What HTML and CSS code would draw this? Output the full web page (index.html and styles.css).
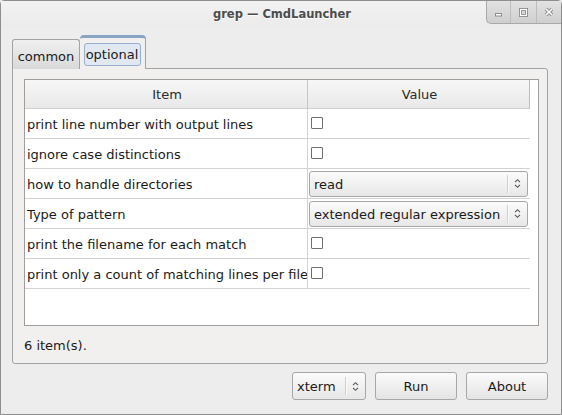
FILE: index.html
```html
<!DOCTYPE html>
<html>
<head>
<meta charset="utf-8">
<link rel="stylesheet" href="styles.css">
</head>
<body>
<div class="window">
  <div class="titlebar">
    <div></div>
    <div class="title">grep — CmdLauncher</div>
    <div class="wbtns">
      <div class="wbtn"><svg width="9" height="9" viewBox="0 0 9 9"><rect x="1.5" y="5.5" width="6" height="2.5" fill="#fff" stroke="#8c8c8c"/></svg></div>
      <div class="wbtn"><svg width="9" height="9" viewBox="0 0 9 9"><rect x="1.5" y="1.5" width="6" height="6" fill="none" stroke="#8c8c8c" stroke-width="3"/><rect x="1.5" y="1.5" width="6" height="6" fill="none" stroke="#fff" stroke-width="1.2"/></svg></div>
      <div class="wbtn"><svg width="10" height="10" viewBox="0 0 10 10"><path d="M2 2 L8 8 M8 2 L2 8" stroke="#8c8c8c" stroke-width="3.4"/><path d="M2 2 L8 8 M8 2 L2 8" stroke="#fff" stroke-width="1.6"/></svg></div>
    </div>
  </div>
  <div class="content">
    <div class="tabs">
      <div class="tab">common</div>
      <div class="tab active"><span class="focus">optional</span></div>
    </div>
    <div class="panel">
      <div class="tree">
        <div class="row head">
          <div class="cell hcell">Item</div>
          <div class="cell hcell">Value</div>
          <div class="hfill"></div>
        </div>
        <div class="row">
          <div class="cell">print line number with output lines</div>
          <div class="cell val"><span class="check"></span></div>
        </div>
        <div class="row">
          <div class="cell">ignore case distinctions</div>
          <div class="cell val"><span class="check"></span></div>
        </div>
        <div class="row">
          <div class="cell">how to handle directories</div>
          <div class="cell val"><div class="combo wide"><span class="ctext">read</span><span class="csep"></span><svg class="arrow" width="7" height="11" viewBox="0 0 7 11"><path d="M1 4.2 L3.5 1.7 L6 4.2 M1 6.8 L3.5 9.3 L6 6.8" fill="none" stroke="#555" stroke-width="1.1"/></svg></div></div>
        </div>
        <div class="row">
          <div class="cell">Type of pattern</div>
          <div class="cell val"><div class="combo wide"><span class="ctext">extended regular expression</span><span class="csep"></span><svg class="arrow" width="7" height="11" viewBox="0 0 7 11"><path d="M1 4.2 L3.5 1.7 L6 4.2 M1 6.8 L3.5 9.3 L6 6.8" fill="none" stroke="#555" stroke-width="1.1"/></svg></div></div>
        </div>
        <div class="row">
          <div class="cell">print the filename for each match</div>
          <div class="cell val"><span class="check"></span></div>
        </div>
        <div class="row">
          <div class="cell">print only a count of matching lines per file</div>
          <div class="cell val"><span class="check"></span></div>
        </div>
      </div>
      <div class="status">6 item(s).</div>
    </div>
    <div class="actions">
      <div class="combo small"><span class="ctext">xterm</span><span class="csep"></span><svg class="arrow" width="7" height="11" viewBox="0 0 7 11"><path d="M1 4.2 L3.5 1.7 L6 4.2 M1 6.8 L3.5 9.3 L6 6.8" fill="none" stroke="#555" stroke-width="1.1"/></svg></div>
      <div class="btn">Run</div>
      <div class="btn">About</div>
    </div>
  </div>
</div>
</body>
</html>
```
FILE: styles.css
```css
html, body {
  margin: 0;
  padding: 0;
  background: #ededed;
}
body {
  width: 562px;
  height: 415px;
  overflow: hidden;
  font-family: "DejaVu Sans", sans-serif;
  font-size: 13px;
  color: #1a1a1a;
}
.window {
  box-sizing: border-box;
  width: 562px;
  height: 415px;
  border: 1px solid #8e8e8e;
  border-radius: 4px 4px 0 0;
  background: #ededed;
  display: flex;
  flex-direction: column;
}
.titlebar {
  height: 27px;
  display: grid;
  grid-template-columns: 1fr auto 1fr;
  align-items: start;
  background: linear-gradient(#f2f2f2, #ebebeb);
}
.title {
  font-weight: bold;
  font-size: 11.5px;
  color: #4c4c4c;
  line-height: 27px;
  padding-left: 2px;
  text-shadow: 0 1px 0 #fff;
}
.wbtns {
  justify-self: end;
  display: flex;
  height: 22px;
  border-left: 1px solid #a9a9a9;
  border-bottom: 1px solid #a9a9a9;
  border-bottom-left-radius: 5px;
  background: linear-gradient(#e2e2e2, #cfcfcf);
  overflow: hidden;
}
.wbtn {
  width: 25px;
  display: flex;
  align-items: center;
  justify-content: center;
  border-left: 1px solid #bdbdbd;
}
.wbtn:first-child { border-left: none; width: 23px; }
.wbtn:last-child { width: 24px; }
.content {
  flex: 1;
  display: flex;
  flex-direction: column;
  padding: 8px 13px 0 11px;
}
.tabs {
  display: flex;
  align-items: flex-end;
  height: 33px;
  position: relative;
  z-index: 1;
  margin-bottom: -1px;
}
.tab {
  box-sizing: border-box;
  height: 30px;
  width: 68px;
  border: 1px solid #a3a3a3;
  border-bottom: none;
  border-radius: 3px 3px 0 0;
  background: linear-gradient(#f0f0f0, #d9d9d9);
  display: flex;
  align-items: center;
  justify-content: center;
  padding-top: 3px;
  color: #1a1a1a;
}
.tab.active {
  height: 34px;
  width: 66px;
  border-top: 3px solid #7ea6d8;
  border-color: #8aa4c6 #a3a3a3 #a3a3a3 #a3a3a3;
  background: #f1f0ef;
  padding-top: 0;
  border-left: none;
  border-radius: 4px 4px 0 0;
}
.focus {
  box-sizing: border-box;
  width: 57px;
  height: 23px;
  border: 1px solid #96afd0;
  border-radius: 3px;
  background: #e1e8f2;
  display: flex;
  align-items: center;
  justify-content: center;
  margin-top: 2px;
  margin-left: -1px;
}
.panel {
  box-sizing: border-box;
  height: 296px;
  border: 1px solid #a3a3a3;
  border-radius: 0 3px 3px 3px;
  background: #f1f0ef;
  padding: 10px 8px 0 11px;
  display: flex;
  flex-direction: column;
}
.tree {
  box-sizing: border-box;
  height: 247px;
  border: 1px solid #9e9e9e;
  background: #fff;
}
.row {
  display: grid;
  grid-template-columns: 283px 222px;
  height: 30px;
}
.row > .cell {
  box-sizing: border-box;
  border-bottom: 1px solid #d2d2d2;
  display: flex;
  align-items: center;
  padding-left: 2px;
  padding-top: 1px;
  white-space: nowrap;
  overflow: hidden;
}
.row > .cell:first-child {
  border-right: 1px solid #d2d2d2;
}
.row.head {
  height: 29px;
  grid-template-columns: 283px 222px 1fr;
}
.row.head > .hcell {
  justify-content: center;
  padding-top: 0;
  background: linear-gradient(#f7f7f7, #e9e9e9);
  border-bottom: 1px solid #cfcfcf;
  border-right: 1px solid #c6c6c6;
  color: #2a2a2a;
}
.row.head > .hcell:nth-child(2) {
  border-right: 1px solid #bdbdbd;
}
.hfill {
  background: #fff;
}
.cell.val {
  padding-left: 3px;
  padding-top: 0;
}
.check {
  box-sizing: border-box;
  width: 12px;
  height: 12px;
  border: 1px solid #6f6f6f;
  border-radius: 1px;
  background: #fff;
  margin-top: -2px;
}
.combo {
  box-sizing: border-box;
  height: 26px;
  border: 1px solid #a7a7a7;
  border-radius: 3px;
  background: linear-gradient(#fbfbfb, #e7e7e7);
  display: flex;
  align-items: center;
}
.combo.wide {
  width: 219px;
  margin-left: -2px;
}
.ctext {
  flex: 1;
  padding-left: 4px;
  padding-top: 1px;
  white-space: nowrap;
  overflow: hidden;
}
.csep {
  width: 1px;
  height: 18px;
  background: #d0d0d0;
  border-right: 1px solid #fafafa;
}
.arrow {
  margin: 0 6px 0 5px;
}
.status {
  height: 36px;
  display: flex;
  align-items: center;
  padding-top: 1px;
}
.actions {
  display: flex;
  justify-content: flex-end;
  gap: 9px;
  margin-top: 8px;
}
.combo.small {
  height: 28px;
  width: 74px;
}
.combo.small .ctext { padding-left: 4px; }
.btn {
  box-sizing: border-box;
  width: 82px;
  height: 28px;
  border: 1px solid #a7a7a7;
  border-radius: 3px;
  background: linear-gradient(#fbfbfb, #e4e4e4);
  display: flex;
  align-items: center;
  justify-content: center;
}
```
